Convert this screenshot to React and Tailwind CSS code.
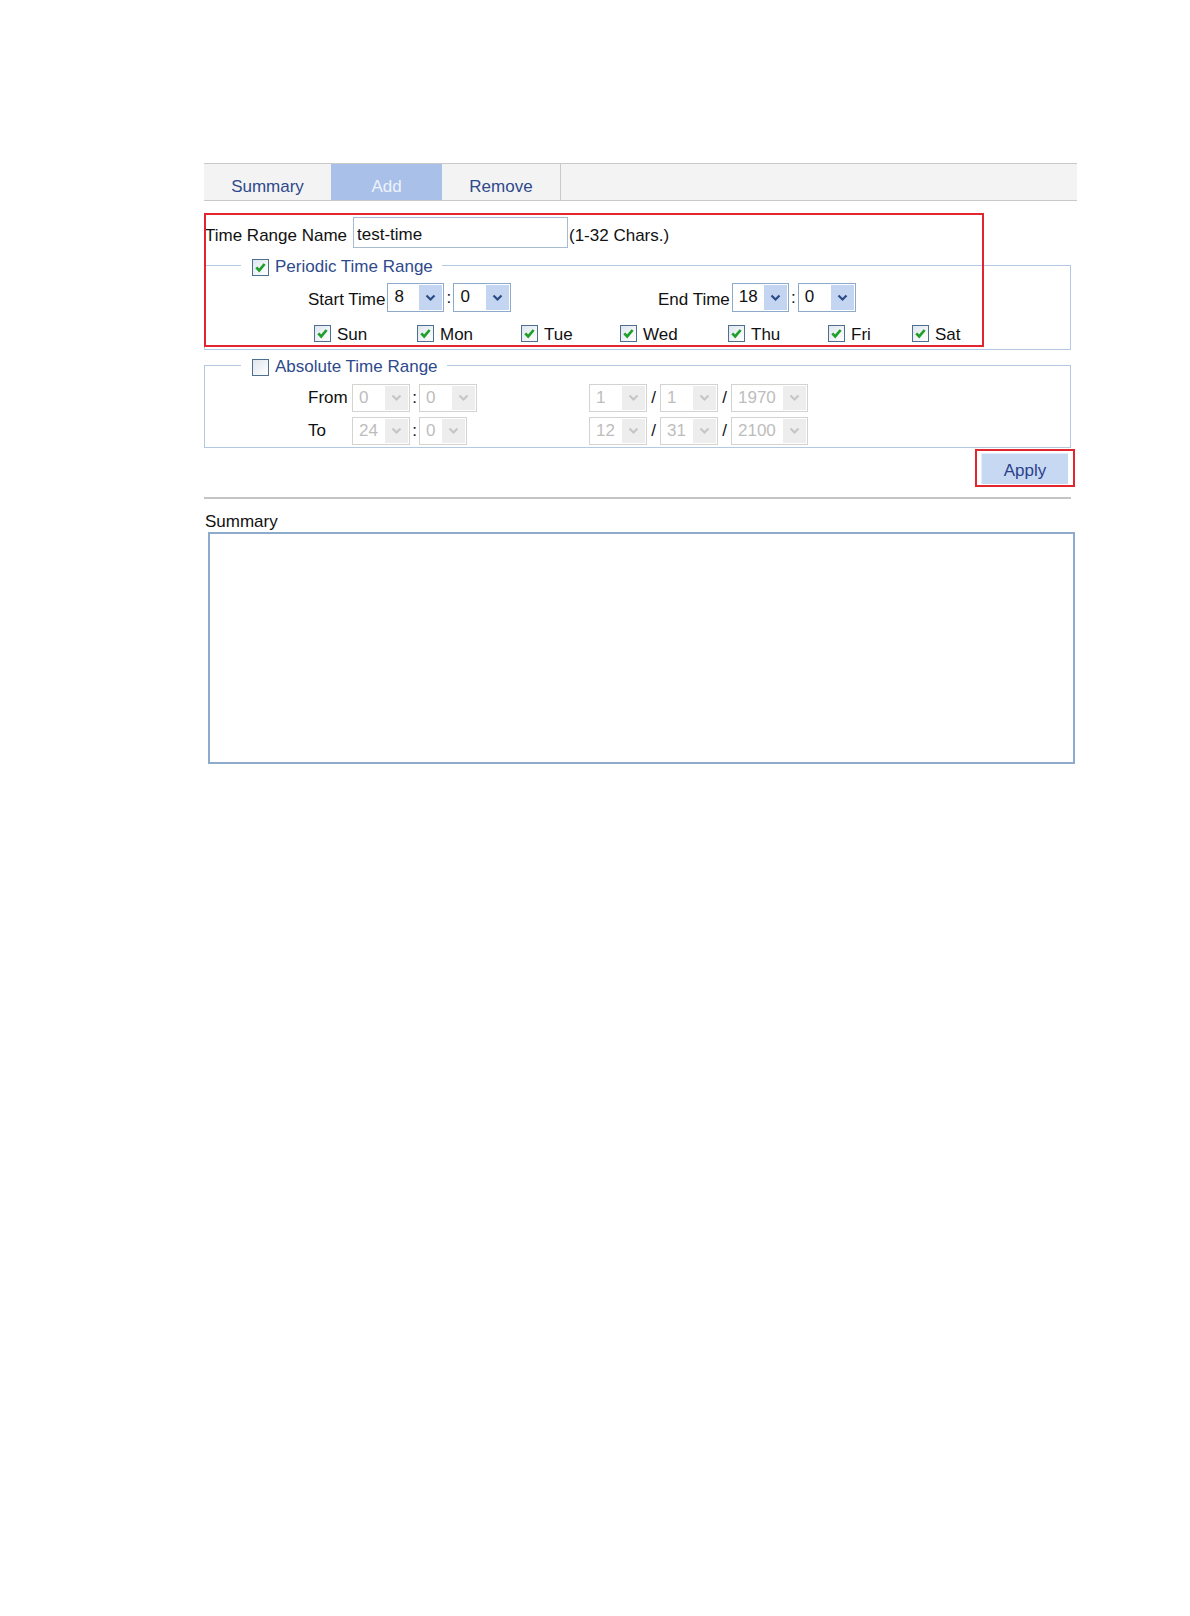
import React from 'react';

const font = { fontFamily: '"Liberation Sans", Arial, sans-serif' };

function Chevron({ disabled }) {
    return (
        <svg width="11" height="8" viewBox="0 0 11 8">
            <path
                d="M1.5 1.5 L5.5 5.5 L9.5 1.5"
                fill="none"
                stroke={disabled ? '#c6c6c6' : '#2a4a86'}
                strokeWidth="2.2"
            />
        </svg>
    );
}

function Select({ value, width, height = 'h-[29px]', disabled }) {
    return (
        <div
            className={`flex ${height} ${width} shrink-0 border bg-white ${
                disabled ? 'border-[#d3d3cf]' : 'border-[#8eaacb]'
            }`}
        >
            <span
                className={`flex-1 pl-[6px] leading-[26px] ${disabled ? 'text-[#bdbdbd]' : 'text-[#111]'}`}
            >
                {value}
            </span>
            <span
                className={`m-[1px] flex w-[23px] items-center justify-center ${
                    disabled ? 'bg-[#ededed]' : 'bg-[#c4d5f1]'
                }`}
            >
                <Chevron disabled={disabled} />
            </span>
        </div>
    );
}

function Checkbox({ checked }) {
    return (
        <span className="flex h-[17px] w-[17px] shrink-0 items-center justify-center border border-[#4f6f92] bg-gradient-to-br from-[#dfe6ee] to-white">
            {checked && (
                <svg width="13" height="13" viewBox="0 0 13 13">
                    <path d="M2.3 6.3 L5.2 9.4 L10.6 3" fill="none" stroke="#1f9e2a" strokeWidth="2.7" />
                </svg>
            )}
        </span>
    );
}

function Sep({ children, w = 'w-[9px]' }) {
    return <span className={`${w} shrink-0 text-center text-[#111]`}>{children}</span>;
}

const days = [
    ['Sun', 'w-[103px]'],
    ['Mon', 'w-[104px]'],
    ['Tue', 'w-[99px]'],
    ['Wed', 'w-[108px]'],
    ['Thu', 'w-[100px]'],
    ['Fri', 'w-[84px]'],
    ['Sat', 'w-auto'],
];

function Legend({ checked, children }) {
    return (
        <legend className="ml-[36px] flex h-[23px] items-center pl-[11px] pr-[9px] pt-[3px]">
            <Checkbox checked={checked} />
            <span className="ml-[6px] text-[#2e4a8c]">{children}</span>
        </legend>
    );
}

export default function App() {
    return (
        <div className="min-h-[1616px] bg-white pl-[204px] pt-[163px] text-[17px] leading-[20px] text-[#111]" style={font}>
            <div className="relative w-[873px]">
                <div className="flex h-[38px] border-y border-[#c9c9c9] bg-[#f3f3f3] text-[#2e4a8c]">
                    <div className="flex w-[127px] items-center justify-center pt-[10px]">Summary</div>
                    <div className="flex w-[111px] items-center justify-center bg-[#a9c1e9] pt-[10px] text-[#eef3fb]">Add</div>
                    <div className="flex w-[119px] items-center justify-center border-r border-[#c9c9c9] pt-[10px]">Remove</div>
                </div>

                <div className="mt-[16px] flex items-center">
                    <span className="w-[149px] pl-[1px] pt-[6px]">Time Range Name</span>
                    <div className="h-[31px] w-[215px] border border-[#a8bbd2] bg-white pl-[3px] pt-[9px] leading-[16px]">test-time</div>
                    <span className="ml-[1px] pt-[6px]">(1-32 Chars.)</span>
                </div>

                <fieldset className="mt-[6px] w-[867px] border border-[#b3c8e2] pb-[7px]">
                    <Legend checked>Periodic Time Range</Legend>
                    <div className="mt-[6px] flex items-center pl-[103px]">
                        <div className="flex w-[350px] items-center">
                            <span className="pt-[4px]">Start Time</span>
                            <span className="ml-[2px]" />
                            <Select value="8" width="w-[57px]" />
                            <Sep>:</Sep>
                            <Select value="0" width="w-[58px]" />
                        </div>
                        <span className="pt-[4px]">End Time</span>
                        <span className="ml-[2px]" />
                        <Select value="18" width="w-[57px]" />
                        <Sep>:</Sep>
                        <Select value="0" width="w-[58px]" />
                    </div>
                    <div className="mt-[13px] flex h-[17px] items-center pl-[109px]">
                        {days.map(([d, w]) => (
                            <div key={d} className={`flex items-center ${w}`}>
                                <Checkbox checked />
                                <span className="ml-[6px] pt-[3px]">{d}</span>
                            </div>
                        ))}
                    </div>
                </fieldset>

                <fieldset className="mt-[4px] w-[867px] border border-[#b3c8e2] pb-[2px]">
                    <Legend>Absolute Time Range</Legend>
                    <div className="mt-[7px] flex items-center pl-[103px]">
                        <div className="flex w-[281px] items-center">
                            <span className="w-[44px]">From</span>
                            <Select value="0" width="w-[58px]" height="h-[28px]" disabled />
                            <Sep>:</Sep>
                            <Select value="0" width="w-[58px]" height="h-[28px]" disabled />
                        </div>
                        <Select value="1" width="w-[58px]" height="h-[28px]" disabled />
                        <Sep w="w-[13px]">/</Sep>
                        <Select value="1" width="w-[58px]" height="h-[28px]" disabled />
                        <Sep w="w-[13px]">/</Sep>
                        <Select value="1970" width="w-[77px]" height="h-[28px]" disabled />
                    </div>
                    <div className="mt-[5px] flex items-center pl-[103px]">
                        <div className="flex w-[281px] items-center">
                            <span className="w-[44px]">To</span>
                            <Select value="24" width="w-[58px]" height="h-[28px]" disabled />
                            <Sep>:</Sep>
                            <Select value="0" width="w-[48px]" height="h-[28px]" disabled />
                        </div>
                        <Select value="12" width="w-[58px]" height="h-[28px]" disabled />
                        <Sep w="w-[13px]">/</Sep>
                        <Select value="31" width="w-[58px]" height="h-[28px]" disabled />
                        <Sep w="w-[13px]">/</Sep>
                        <Select value="2100" width="w-[77px]" height="h-[28px]" disabled />
                    </div>
                </fieldset>

                <div className="mt-[5px] flex w-[873px] justify-end pr-[9px]">
                    <div className="relative">
                        <button className="h-[31px] w-[87px] border-t border-l border-[#e4edf9] bg-[#c6d8f2] pt-[3px] text-[#2c418c]">
                            Apply
                        </button>
                        <div className="absolute -bottom-[3px] -left-[6px] -right-[7px] -top-[4px] border-2 border-[#e2252e]" />
                    </div>
                </div>

                <div className="mt-[13px] h-[2px] w-[867px] bg-[#c4c4c4]" />

                <div className="mt-[13px] pl-[1px]">Summary</div>
                <div className="ml-[4px] h-[232px] w-[867px] border-2 border-[#8dabcd]" />

                <div className="pointer-events-none absolute left-0 top-[50px] h-[134px] w-[780px] border-2 border-[#e2252e]" />
            </div>
        </div>
    );
}
